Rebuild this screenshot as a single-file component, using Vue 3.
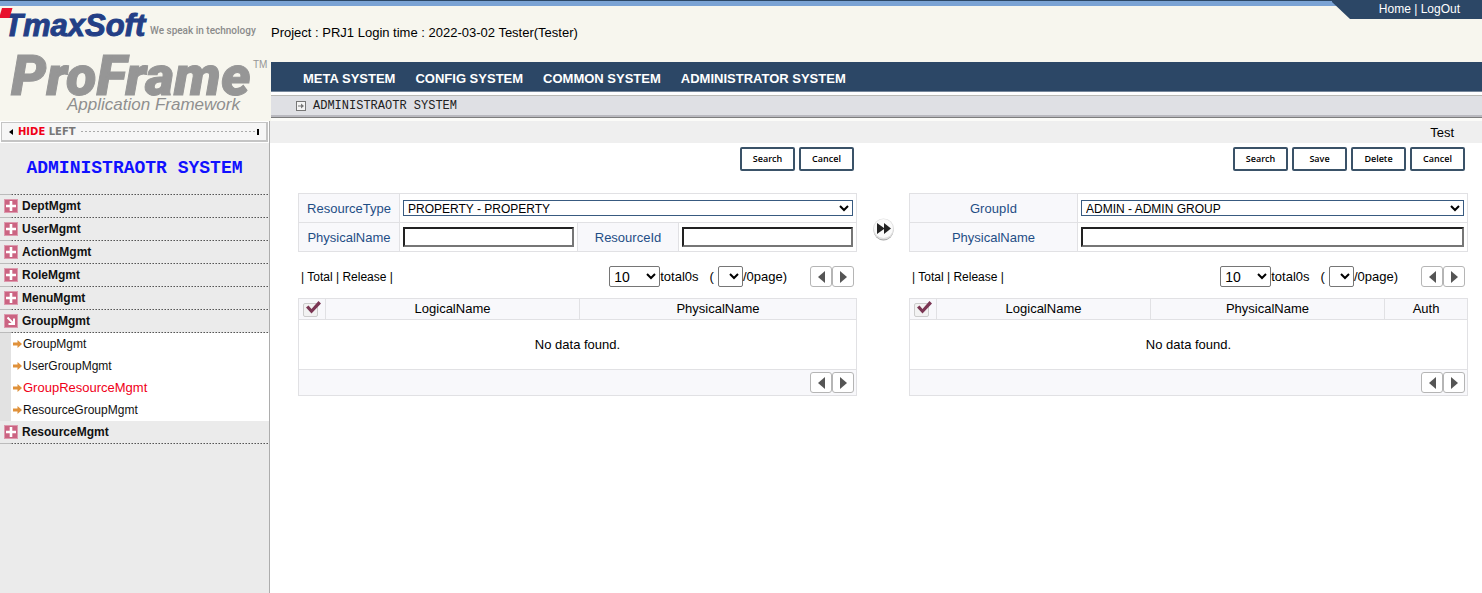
<script setup>
import { ref } from 'vue'

const systems = ['META SYSTEM', 'CONFIG SYSTEM', 'COMMON SYSTEM', 'ADMINISTRATOR SYSTEM']

const menu = [
  { name: 'DeptMgmt' },
  { name: 'UserMgmt' },
  { name: 'ActionMgmt' },
  { name: 'RoleMgmt' },
  { name: 'MenuMgmt' },
  {
    name: 'GroupMgmt',
    children: ['GroupMgmt', 'UserGroupMgmt', 'GroupResourceMgmt', 'ResourceGroupMgmt'],
  },
  { name: 'ResourceMgmt' },
]
const current = 'GroupResourceMgmt'

const panels = [
  {
    id: 'resource',
    actions: ['Search', 'Cancel'],
    columns: [
      { name: 'LogicalName', cls: 'c-logical' },
      { name: 'PhysicalName', cls: 'c-rest' },
    ],
  },
  {
    id: 'group',
    actions: ['Search', 'Save', 'Delete', 'Cancel'],
    columns: [
      { name: 'LogicalName', cls: 'c-logical-narrow' },
      { name: 'PhysicalName', cls: 'c-rest' },
      { name: 'Auth', cls: 'c-auth' },
    ],
  },
]

const resourceType = ref('PROPERTY')
const groupId = ref('ADMIN')
const resourceName = ref('')
const resourceId = ref('')
const groupName = ref('')
</script>

<template>
  <div class="page">
    <header class="top">
      <div class="brand">
        <svg class="logo" viewBox="0 0 271 120" role="img" aria-label="TmaxSoft ProFrame Application Framework">
          <text class="tmax" x="4" y="36">TmaxSoft</text>
          <path d="M2 8h10.500l-3 10H-1z" fill="#e8112d" />
          <text class="slogan" x="150" y="34">We speak in technology</text>
          <text class="pro" x="11" y="95">ProFrame</text>
          <text class="tm" x="253" y="68">TM</text>
          <text class="fw" x="67" y="110">Application Framework</text>
        </svg>
      </div>
      <div class="head">
        <div class="intro">
          <p class="session">Project : PRJ1 Login time : 2022-03-02 Tester(Tester)</p>
          <div class="user"><a href="#home">Home</a> | <a href="#logout">LogOut</a></div>
        </div>
        <nav class="nav">
          <a v-for="s in systems" :key="s" href="#system">{{ s }}</a>
        </nav>
        <div class="crumb">
          <svg width="10" height="10" viewBox="0 0 10 10" aria-hidden="true">
            <rect x=".5" y=".5" width="9" height="9" fill="#f4f4f4" stroke="#777" />
            <path d="M2 4.500h3V2.500L8 5 5 7.500V5.500H2z" fill="#777" />
          </svg>
          <span>ADMINISTRAOTR SYSTEM</span>
        </div>
      </div>
    </header>

    <div class="body">
      <aside class="side">
        <button class="hide" type="button">
          <svg width="4" height="6" viewBox="0 0 4 6" aria-hidden="true"><path d="M4 0v6L0 3z" /></svg>
          <span><b>HIDE</b> LEFT</span>
          <i></i>
        </button>
        <h1>ADMINISTRAOTR SYSTEM</h1>
        <ul class="menu">
          <li v-for="m in menu" :key="m.name">
            <a class="item" href="#menu">
              <svg width="14" height="14" viewBox="0 0 14 14" aria-hidden="true">
                <rect width="14" height="14" fill="#dd9aae" />
                <rect x="1" y="1" width="12" height="12" fill="#cb6482" />
                <path v-if="m.children" d="M3.500 3.500l6 6M10 4.500v5.500H4.500" stroke="#fff" stroke-width="2" fill="none" />
                <path v-else d="M7 2v10M2 7h10" stroke="#fff" stroke-width="2.600" />
              </svg>
              {{ m.name }}
            </a>
            <ul v-if="m.children" class="sub">
              <li v-for="c in m.children" :key="c">
                <a href="#sub" :class="{ on: c === current }">
                  <svg width="9" height="8" viewBox="0 0 9 8" aria-hidden="true">
                    <path d="M0 2.500h4.500V0L9 4 4.500 8V5.500H0z" fill="#e0913a" />
                  </svg>
                  {{ c }}
                </a>
              </li>
            </ul>
          </li>
        </ul>
      </aside>

      <main class="main">
        <div class="title">Test</div>
        <div class="panels">
          <template v-for="(p, i) in panels" :key="p.id">
            <div v-if="i" class="move">
              <button type="button" aria-label="Move to group">
                <svg width="23" height="23" viewBox="0 0 23 23">
                  <circle cx="11.500" cy="12.500" r="10" fill="#a4a4a4" />
                  <circle cx="11.500" cy="11" r="10.500" fill="#dedede" />
                  <circle cx="11.500" cy="10.500" r="9.500" fill="#fafafa" />
                  <path d="M5 5l7 5V5l7 5.500-7 5.500v-5l-7 5z" fill="#222" />
                </svg>
              </button>
            </div>
            <section class="panel">
              <div class="actions">
                <button v-for="a in p.actions" :key="a" type="button">{{ a }}</button>
              </div>

              <div v-if="p.id === 'resource'" class="form form-resource">
                <label for="rtype">ResourceType</label>
                <div class="field wide">
                  <select id="rtype" v-model="resourceType">
                    <option value="PROPERTY">PROPERTY - PROPERTY</option>
                  </select>
                </div>
                <label for="rname">PhysicalName</label>
                <div class="field"><input id="rname" v-model="resourceName" type="text" /></div>
                <label for="rid">ResourceId</label>
                <div class="field"><input id="rid" v-model="resourceId" type="text" /></div>
              </div>
              <div v-else class="form form-group">
                <label for="gid">GroupId</label>
                <div class="field">
                  <select id="gid" v-model="groupId">
                    <option value="ADMIN">ADMIN - ADMIN GROUP</option>
                  </select>
                </div>
                <label for="gname">PhysicalName</label>
                <div class="field"><input id="gname" v-model="groupName" type="text" /></div>
              </div>

              <div class="tools">
                <div class="links">| <a href="#total">Total</a> | <a href="#release">Release</a> |</div>
                <div class="paging">
                  <select class="size" aria-label="Rows per page"><option>10</option></select>
                  <span>total0s</span>
                  <span class="paren">(</span>
                  <select class="pageno" aria-label="Page"></select>
                  <span>/0page)</span>
                </div>
                <div class="arrows">
                  <button type="button" aria-label="Previous page">
                    <svg width="7" height="12" viewBox="0 0 7 12"><path d="M7 0v12L0 6z" /></svg>
                  </button>
                  <button type="button" aria-label="Next page">
                    <svg width="7" height="12" viewBox="0 0 7 12"><path d="M0 0v12l7-6z" /></svg>
                  </button>
                </div>
              </div>

              <table class="grid">
                <thead>
                  <tr>
                    <th class="c-check">
                      <label class="tick">
                        <input type="checkbox" checked aria-label="Select all" />
                        <svg width="18" height="16" viewBox="0 0 18 16" aria-hidden="true">
                          <path d="M3 6.500l2.500-2 3 3.500L15.500 0 18 2.500 8.500 12.500z" fill="#7b3654" />
                        </svg>
                      </label>
                    </th>
                    <th v-for="c in p.columns" :key="c.name" :class="c.cls">{{ c.name }}</th>
                  </tr>
                </thead>
                <tbody>
                  <tr>
                    <td :colspan="p.columns.length + 1">No data found.</td>
                  </tr>
                </tbody>
                <tfoot>
                  <tr>
                    <td :colspan="p.columns.length + 1">
                      <div class="arrows">
                        <button type="button" aria-label="Previous page">
                          <svg width="7" height="12" viewBox="0 0 7 12"><path d="M7 0v12L0 6z" /></svg>
                        </button>
                        <button type="button" aria-label="Next page">
                          <svg width="7" height="12" viewBox="0 0 7 12"><path d="M0 0v12l7-6z" /></svg>
                        </button>
                      </div>
                    </td>
                  </tr>
                </tfoot>
              </table>
            </section>
          </template>
        </div>
      </main>
    </div>
  </div>
</template>

<style>
body {
  margin: 0;
  background: #fff;
}
</style>

<style scoped>
* {
  box-sizing: border-box;
}
.page {
  min-height: 100vh;
  display: flex;
  flex-direction: column;
  font: 13px/16px Arial, 'Liberation Sans', sans-serif;
  color: #000;
}
a {
  color: inherit;
  text-decoration: none;
}
button {
  margin: 0;
  padding: 0;
  font: inherit;
  cursor: pointer;
}

/* header */
.top {
  display: flex;
  background: linear-gradient(#2c4766 1px, #7ba3d4 1px 6px, #f7f6ee 6px);
}
.brand {
  flex: none;
  width: 271px;
}
.logo {
  display: block;
  width: 271px;
  height: 120px;
}
.logo text {
  font-family: Arial, 'Liberation Sans', sans-serif;
}
.logo .tmax {
  font-size: 31px;
  font-weight: bold;
  font-style: italic;
  fill: #233f86;
  stroke: #233f86;
}
.logo .slogan {
  font-family: Roboto, sans-serif;
  font-size: 10px;
  font-weight: 500;
  fill: #8b8b8b;
}
.logo .pro {
  font-family: Roboto, sans-serif;
  font-size: 56px;
  font-weight: 900;
  font-style: italic;
  fill: #969696;
  stroke: #969696;
}
.logo .tm {
  font-size: 10px;
  fill: #969696;
}
.logo .fw {
  font-size: 17px;
  font-style: italic;
  fill: #8f8f8f;
}
.head {
  flex: 1;
}
.intro {
  display: flex;
  justify-content: space-between;
  height: 62px;
}
.session {
  margin: 0;
  padding-top: 25px;
}
.user {
  width: 150px;
  height: 19px;
  padding-right: 22px;
  text-align: right;
  font-size: 12px;
  line-height: 18px;
  color: #fff;
  background: #2c4766;
  clip-path: polygon(0 0, 100% 0, 100% 100%, 18px 100%, 0 2px);
}
.nav {
  display: flex;
  gap: 20px;
  height: 30px;
  padding-left: 32px;
  font-weight: bold;
  line-height: 33px;
  color: #fff;
  background: #2c4766;
  border-bottom: 1px solid #76879a;
}
.crumb {
  display: flex;
  align-items: center;
  gap: 7px;
  height: 29px;
  padding: 0 0 4px 25px;
  border-top: 3px solid #fff;
  font: 12px/20px 'Courier New', 'Liberation Mono', monospace;
  color: #222;
  background: linear-gradient(#b9b9b4 1px, #dfe0e4 1px 20px, #b9b9bf 20px 22px, #7d7d7d 22px 23px, #fbfbf8 23px);
}

/* sidebar */
.body {
  flex: 1;
  display: flex;
}
.side {
  flex: none;
  width: 270px;
  background: #ebebeb;
  border-right: 1px solid #adadad;
}
.hide {
  display: flex;
  align-items: center;
  gap: 5px;
  width: 267px;
  height: 20px;
  margin: 1px;
  padding: 0 7px;
  border: solid #c4c4c4;
  border-width: 1px 2px 2px 1px;
  outline: 1px solid #fff;
  background: #f6f6f6;
  font: bold 10px/12px 'DejaVu Sans', sans-serif;
  color: #777;
}
.hide b {
  color: #f00018;
}
.hide i {
  flex: 1;
  height: 6px;
  border-right: 2px solid #000;
  background: repeating-linear-gradient(90deg, #aaa 0 2px, transparent 2px 4px) center / 100% 1px no-repeat;
}
.side h1 {
  margin: 0;
  height: 51px;
  text-align: center;
  font: bold 18px/50px 'Courier New', 'Liberation Mono', monospace;
  color: #1010ff;
}
.menu,
.sub {
  margin: 0;
  padding: 0;
  list-style: none;
}
.menu {
  background: linear-gradient(90deg, #bbb 11px, transparent 11px) 0 0 / 100% 1px no-repeat,
    repeating-linear-gradient(90deg, #555 0 1px, #eee 1px 2px, #999 2px 3px) 0 0 / 100% 1px no-repeat;
  padding-top: 1px;
}
.item {
  display: flex;
  align-items: center;
  gap: 4px;
  height: 23px;
  padding: 0 0 1px 4px;
  font-size: 12px;
  font-weight: bold;
  color: #111;
  background: linear-gradient(90deg, #bbb 11px, transparent 11px) 0 100% / 100% 1px no-repeat,
    repeating-linear-gradient(90deg, #555 0 1px, #eee 1px 2px, #999 2px 3px) 0 100% / 100% 1px no-repeat;
}
.sub {
  border-left: 11px solid #e2e2e2;
  background: #fff;
}
.sub a {
  display: flex;
  align-items: center;
  gap: 1px;
  height: 22px;
  padding-left: 2px;
  font-size: 12px;
  color: #111;
}
.sub a.on {
  font-size: 13px;
  color: #f00018;
}

/* content */
.main {
  flex: 1;
  min-width: 0;
}
.title {
  height: 22px;
  padding-right: 28px;
  text-align: right;
  line-height: 23px;
  background: #efefef;
}
.panels {
  display: grid;
  grid-template-columns: minmax(0, 1fr) 52px minmax(0, 1fr);
  padding: 4px 14px 0 28px;
}
.move {
  display: flex;
  justify-content: center;
  padding-top: 71px;
}
.move button {
  width: 23px;
  height: 23px;
  border: 0;
  background: none;
}
.actions {
  display: flex;
  justify-content: flex-end;
  gap: 4px;
  padding-right: 3px;
}
.actions button {
  width: 55px;
  height: 24px;
  border: 2px solid #3a5268;
  border-radius: 2px;
  background: #fff;
  font: 600 9px/18px 'Open Sans', sans-serif;
  color: #000;
}
.form {
  display: grid;
  grid-auto-rows: 28px;
  gap: 1px;
  margin-top: 22px;
  border: 1px solid #e1e1e4;
  background: #e1e1e4;
}
.form-resource {
  grid-template-columns: 100px 1fr 100px 1fr;
}
.form-group {
  grid-template-columns: 167px 1fr;
}
.form label {
  text-align: center;
  line-height: 29px;
  color: #1f4e86;
  background: #f8f8fb;
}
.field {
  display: flex;
  align-items: center;
  padding: 0 3px;
  background: #fff;
}
.field.wide {
  grid-column: span 3;
}
.field select {
  width: 100%;
  height: 16px;
  border: 1px solid #385a80;
  border-radius: 0;
  background-color: #fff;
  font: 12px Arial, 'Liberation Sans', sans-serif;
  color: #000;
}
.field input {
  width: 100%;
  height: 20px;
  padding: 0 2px;
  border: 2px solid;
  border-color: #222 #767676 #767676 #222;
}
.tools {
  display: flex;
  align-items: center;
  height: 21px;
  margin-top: 14px;
  padding: 0 3px;
}
.links {
  flex: 1;
  font-size: 12px;
}
.paging {
  display: flex;
  align-items: center;
  margin-right: 23px;
}
.paging select {
  height: 21px;
  border: 1px solid #767676;
  border-radius: 2px;
  background-color: #fff;
  color: #000;
  font: 14px Arial, 'Liberation Sans', sans-serif;
}
.size {
  width: 51px;
}
.pageno {
  width: 25px;
}
.paren {
  padding: 0 4px 0 11px;
}
.arrows {
  display: flex;
  justify-content: flex-end;
}
.arrows button {
  display: grid;
  place-items: center;
  width: 22px;
  height: 21px;
  border: 1px solid #b5b5b5;
  border-radius: 3px;
  background: #fff;
}
.arrows path {
  fill: #555;
}
.grid {
  width: 100%;
  margin-top: 11px;
  border-collapse: collapse;
  table-layout: fixed;
}
.grid th,
.grid td {
  padding: 0;
  border: 1px solid #e1e1e4;
  text-align: center;
  font-weight: normal;
}
.grid th {
  height: 21px;
  background: #f8f8fb;
}
.grid tbody td {
  height: 50px;
}
.grid tfoot td {
  height: 26px;
  padding: 0 2px;
  background: #f8f8fb;
}
.c-check {
  width: 27px;
}
.c-logical {
  width: 254px;
}
.c-logical-narrow {
  width: 214px;
}
.c-auth {
  width: 83px;
}
.tick {
  display: grid;
  width: 18px;
  height: 16px;
  margin: 0 auto;
}
.tick input,
.tick svg {
  grid-area: 1 / 1;
}
.tick input {
  appearance: none;
  align-self: end;
  width: 15px;
  height: 14px;
  margin: 0;
  border: 1px solid #ccc;
  border-radius: 2px;
  background: #f2f2f2;
}
</style>
